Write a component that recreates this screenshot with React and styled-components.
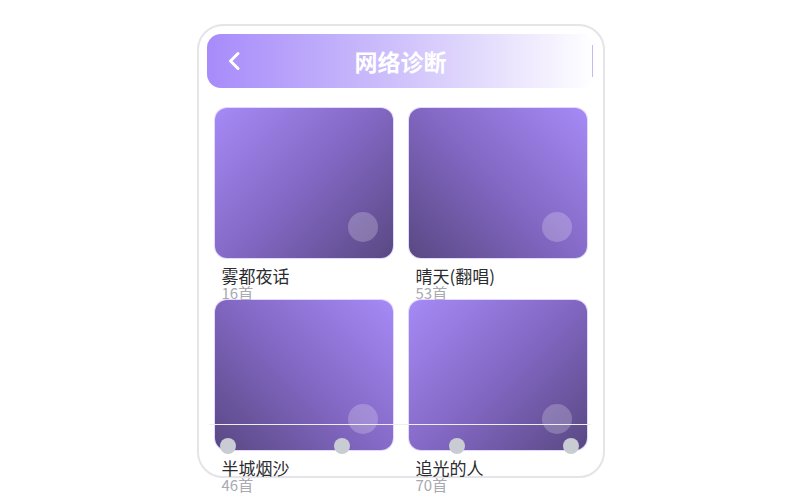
import React from "react";
import styled, { createGlobalStyle } from "styled-components";

const playlists = [
  { title: "雾都夜话", count: 16, angle: 135 },
  { title: "晴天(翻唱)", count: 53, angle: 225 },
  { title: "半城烟沙", count: 46, angle: 225 },
  { title: "追光的人", count: 70, angle: 135 },
];

export default function App() {
  return (
    <>
      <GlobalStyle />
      <Page>
        <Phone>
          <Header>
            <BackButton aria-label="返回">
              <svg width="14" height="20" viewBox="0 0 14 20" fill="none">
                <path
                  d="M11 2.5 L3.5 10 L11 17.5"
                  stroke="#fff"
                  strokeWidth="3"
                  strokeLinecap="round"
                  strokeLinejoin="round"
                />
              </svg>
            </BackButton>
            <Title>网络诊断</Title>
            <HeaderEnd>
              <Divider />
            </HeaderEnd>
          </Header>

          <Grid>
            {playlists.map((item) => (
              <Item key={item.title}>
                <Cover $angle={item.angle}>
                  <PlayDot />
                </Cover>
                <ItemTitle>{item.title}</ItemTitle>
                <ItemCount>{item.count}首</ItemCount>
              </Item>
            ))}
          </Grid>

          <Track>
            <TrackLine />
            <Knobs>
              <Knob />
              <Knob />
              <Knob />
              <Knob />
            </Knobs>
          </Track>
        </Phone>
      </Page>
    </>
  );
}

const GlobalStyle = createGlobalStyle`
  html, body {
    margin: 0;
    background: #ffffff;
    font-family: "Noto Sans CJK SC", "Noto Sans", sans-serif;
  }
`;

const Page = styled.div`
  display: flex;
  justify-content: center;
  box-sizing: border-box;
  height: 500px;
  padding-top: 24px;
`;

const Phone = styled.div`
  position: relative;
  box-sizing: border-box;
  width: 408px;
  height: 454px;
  margin-left: 1px;
  padding: 8px 8px 0;
  border: 2px solid #e4e4e9;
  border-radius: 26px;
  background: #fff;
`;

const Header = styled.div`
  display: grid;
  grid-template-columns: 1fr auto 1fr;
  align-items: center;
  height: 54px;
  padding: 0 2px;
  border-radius: 14px;
  background: linear-gradient(90deg, #a78bfa 0%, #cbbcfb 45%, #ffffff 100%);
`;

const BackButton = styled.div`
  display: flex;
  align-items: center;
  width: 14px;
  height: 20px;
  margin-left: 18px;
`;

const Title = styled.h1`
  margin: 0;
  font-size: 23px;
  font-weight: 700;
  color: #fff;
  letter-spacing: 0;
`;

const HeaderEnd = styled.div`
  display: flex;
  justify-content: flex-end;
`;

const Divider = styled.div`
  width: 1px;
  height: 32px;
  background: #c6b7fb;
`;

const Grid = styled.div`
  display: grid;
  grid-template-columns: 1fr 1fr;
  column-gap: 16px;
  padding: 20px 8px 0;
`;

const Item = styled.div`
  display: flex;
  flex-direction: column;
`;

const Cover = styled.div`
  position: relative;
  height: 150px;
  border-radius: 12px;
  background: linear-gradient(${(p) => p.$angle}deg, #a68af6 0%, #8368c4 50%, #594883 100%);
  box-shadow: 0 0 0 1px rgba(196, 181, 253, 0.5);
`;

const PlayDot = styled.div`
  position: absolute;
  right: 15px;
  bottom: 16px;
  width: 30px;
  height: 30px;
  border-radius: 50%;
  background: rgba(255, 255, 255, 0.22);
`;

const ItemTitle = styled.div`
  margin-top: 8px;
  padding-left: 7px;
  font-size: 17px;
  line-height: 20px;
  color: #2b2b30;
`;

const ItemCount = styled.div`
  padding-left: 7px;
  font-size: 15px;
  line-height: 14px;
  color: #a9a9b1;
`;

const Track = styled.div`
  position: absolute;
  left: 10px;
  top: 398px;
  width: 382px;
`;

const TrackLine = styled.div`
  height: 1px;
  background: #eeeff3;
`;

const Knobs = styled.div`
  display: flex;
  justify-content: space-between;
  margin: 13px 11px 0 11px;
`;

const Knob = styled.div`
  width: 16px;
  height: 16px;
  border-radius: 50%;
  background: #c9ccd3;
`;
